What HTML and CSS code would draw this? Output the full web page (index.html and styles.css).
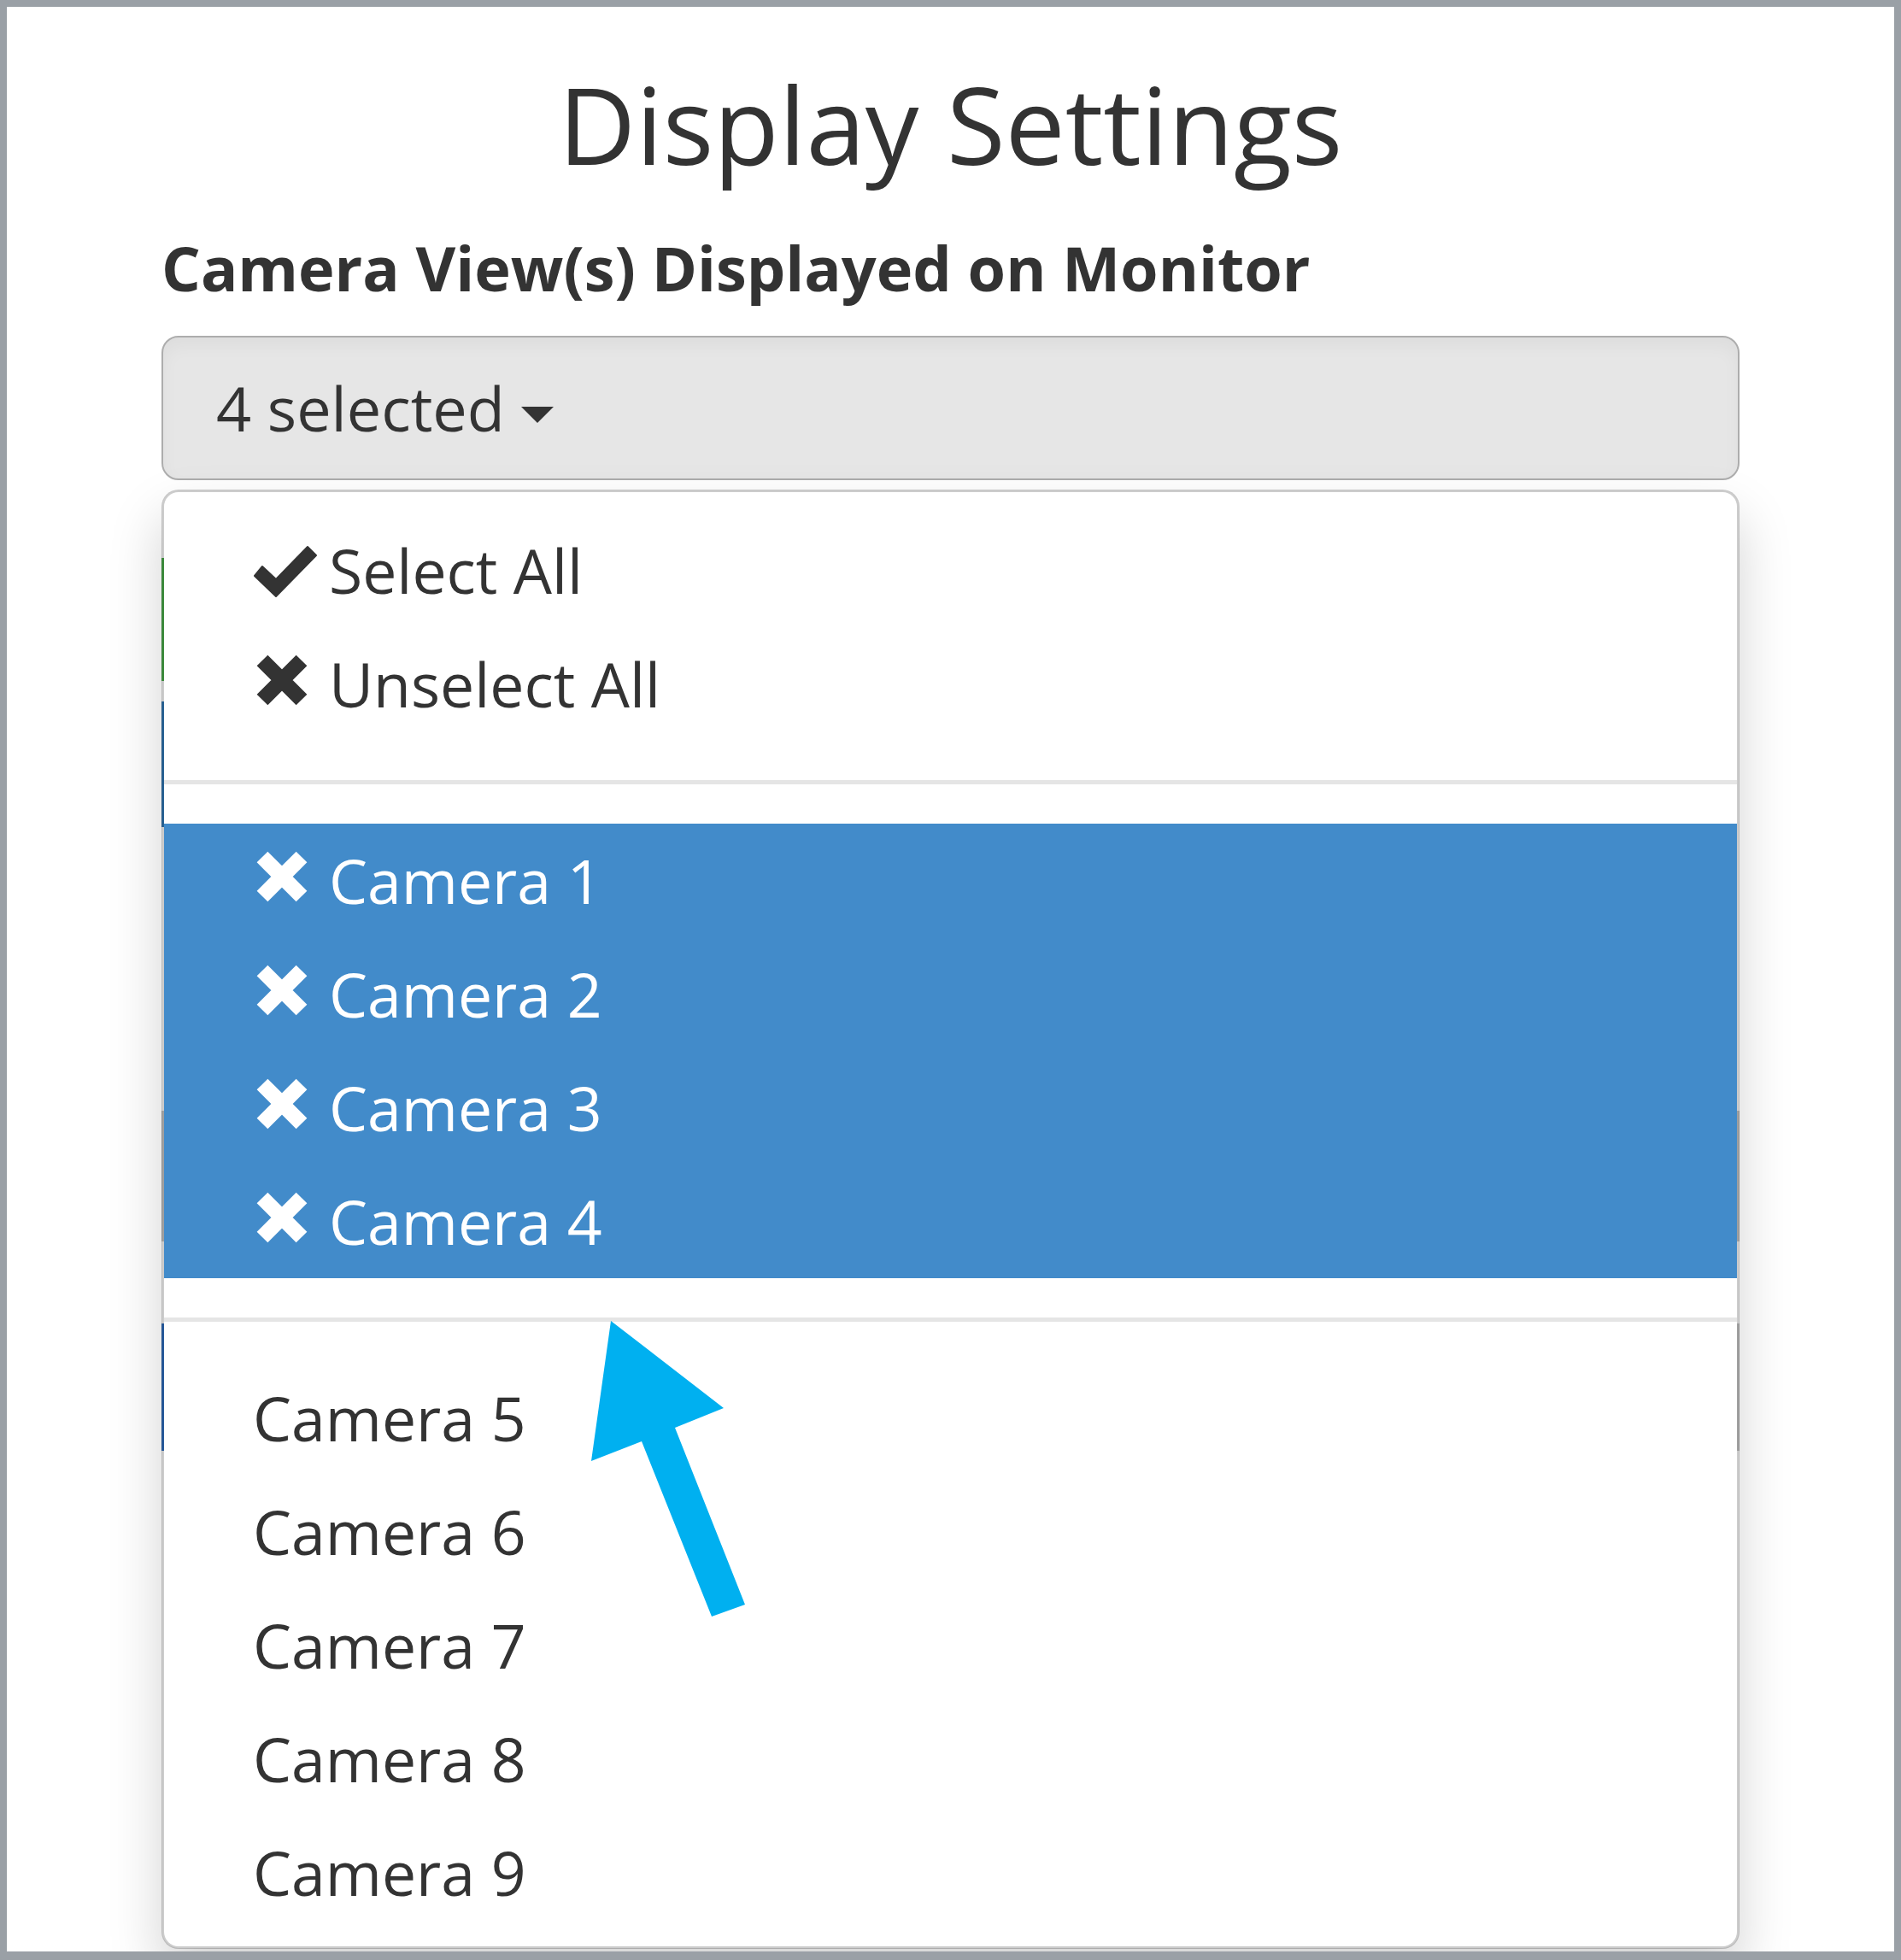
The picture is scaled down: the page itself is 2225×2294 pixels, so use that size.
FILE: index.html
```html
<!DOCTYPE html>
<html lang="en">

<head>
    <meta charset="UTF-8">
    <title>Display Settings</title>
    <meta name="viewport" content="width=device-width, initial-scale=1.0" />
    <link rel="stylesheet" href="styles.css">
</head>

<body>
    <div class="frame">
        <div class="settings">
            <h3 class="title">Display Settings</h3>

            <label class="field-label">Camera View(s) Displayed on Monitor</label>

            <div class="btn-group">
                <button class="multiselect">4 selected <b class="caret"></b></button>

                <ul class="dropdown-menu">
                    <li><a>
                        <svg class="icon icon-ok" viewBox="0 0 75 62"><polygon points="2,36 11,25 27,40 64,2 74,12 27,60" /></svg>Select All
                    </a></li>
                    <li><a>
                        <svg class="icon icon-x" viewBox="0 0 75 60"><path d="M11 7 L57 53 M57 7 L11 53" /></svg>Unselect All
                    </a></li>
                    <li class="divider"></li>
                    <li class="active"><a><svg class="icon icon-x" viewBox="0 0 75 60"><path d="M11 7 L57 53 M57 7 L11 53" /></svg>Camera 1</a></li>
                    <li class="active"><a><svg class="icon icon-x" viewBox="0 0 75 60"><path d="M11 7 L57 53 M57 7 L11 53" /></svg>Camera 2</a></li>
                    <li class="active"><a><svg class="icon icon-x" viewBox="0 0 75 60"><path d="M11 7 L57 53 M57 7 L11 53" /></svg>Camera 3</a></li>
                    <li class="active"><a><svg class="icon icon-x" viewBox="0 0 75 60"><path d="M11 7 L57 53 M57 7 L11 53" /></svg>Camera 4</a></li>
                    <li class="divider"></li>
                    <li><a>Camera 5</a></li>
                    <li><a>Camera 6</a></li>
                    <li><a>Camera 7</a></li>
                    <li><a>Camera 8</a></li>
                    <li><a>Camera 9</a></li>
                </ul>
            </div>

            <!-- form controls hidden under the open menu -->
            <div class="under">
                <div class="under-btn green"></div>
                <div class="under-btn blue"></div>
                <div class="under-wide"></div>
                <div class="under-row">
                    <div class="under-btn blue dark"></div>
                    <div class="under-fill"></div>
                </div>
            </div>
        </div>
    </div>

    <!-- annotation arrow -->
    <svg class="arrow" viewBox="0 0 2225 2294">
        <polygon points="715,1546 847,1648 790,1671 872,1878 833,1892 751,1687 692,1710" />
    </svg>
</body>

</html>
```

FILE: styles.css
```css
body {
    margin: 0;
    font-family: "Open Sans", "Liberation Sans", sans-serif;
    color: #333;
    background: #fff;
    position: relative;
}

.frame {
    height: 2294px;
    box-sizing: border-box;
    border: 8px solid #9aa0a6;
    border-bottom-width: 10px;
    overflow: hidden;
    background: #fff;
}

.settings {
    padding: 0 181px;
    position: relative;
}

.title {
    margin: 69px 0 49px;
    font-size: 125px;
    line-height: 136px;
    font-weight: 400;
    text-align: center;
}

.field-label {
    display: block;
    font-size: 72px;
    line-height: 103px;
    font-weight: 700;
    margin-bottom: 28px;
}

.btn-group {
    position: relative;
}

.multiselect {
    display: block;
    width: 100%;
    text-align: left;
    font-family: inherit;
    font-size: 72px;
    line-height: 103px;
    color: #333;
    padding: 31px 62px;
    background: #e6e6e6;
    border: 2px solid #adadad;
    border-radius: 20px;
    box-shadow: inset 0 10px 20px rgba(0, 0, 0, 0.04);
}

.caret {
    display: inline-block;
    width: 0;
    height: 0;
    vertical-align: middle;
    border-top: 19px solid #333;
    border-left: 19px solid transparent;
    border-right: 19px solid transparent;
}

.dropdown-menu {
    position: absolute;
    top: calc(100% + 11px);
    left: 0;
    right: 0;
    z-index: 10;
    list-style: none;
    margin: 0;
    padding: 25px 0 20px;
    background: #fff;
    background-clip: padding-box;
    border: 3px solid rgba(0, 0, 0, 0.2);
    border-radius: 20px;
    box-shadow: 0 31px 62px rgba(0, 0, 0, 0.175);
}

.dropdown-menu a {
    display: block;
    padding: 15px 104px;
    font-size: 71.5px;
    line-height: 103px;
    color: #333;
    white-space: nowrap;
}

.dropdown-menu .active a {
    background: #428bca;
    color: #fff;
}

.divider {
    height: 5px;
    margin: 46px 0;
    background: #e5e5e5;
}

.icon {
    display: inline-block;
    width: 75px;
    margin-right: 14px;
}

.icon-ok {
    height: 62px;
    vertical-align: -5px;
    fill: currentColor;
    stroke: currentColor;
    stroke-width: 2;
    stroke-linejoin: round;
}

.icon-x {
    height: 60px;
    vertical-align: 2px;
    fill: none;
    stroke: currentColor;
    stroke-width: 18;
}

.under {
    padding-top: 91px;
}

.under-btn {
    width: 600px;
    height: 144px;
}

.green {
    background: #4cae4c;
}

.blue {
    margin-top: 24px;
    height: 147px;
    background: #337ab7;
}

.under-wide {
    margin-top: 332px;
    height: 153px;
    background: #c8c8c8;
}

.under-row {
    display: flex;
    margin-top: 96px;
    height: 149px;
}

.under-row .dark {
    margin-top: 0;
    height: 149px;
    background: #2f6fc0;
}

.under-fill {
    flex: 1;
    background: #c8c8c8;
}

.arrow {
    position: absolute;
    top: 0;
    left: 0;
    width: 2225px;
    height: 2294px;
    z-index: 20;
    fill: #00b0f0;
    pointer-events: none;
}
```
